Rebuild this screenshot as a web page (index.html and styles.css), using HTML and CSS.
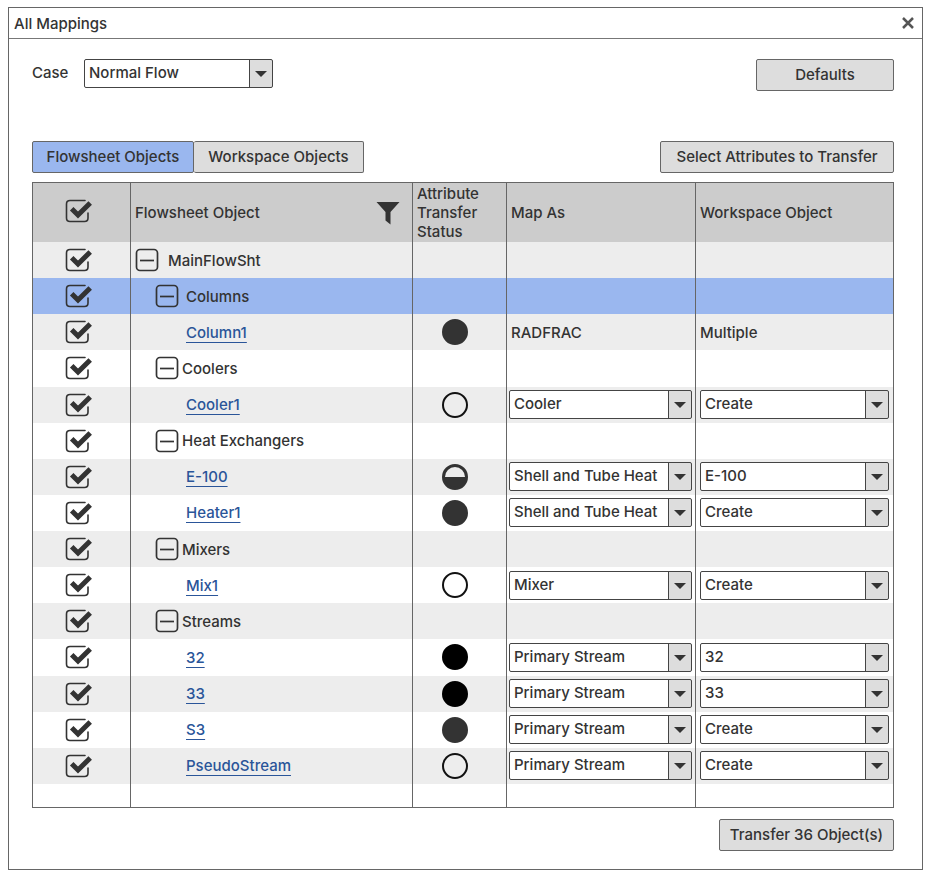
FILE: index.html
```html
<!DOCTYPE html>
<html lang="en">
<head>
<meta charset="utf-8">
<meta name="viewport" content="width=device-width, initial-scale=1">
<title>All Mappings</title>
<link rel="stylesheet" href="styles.css">
</head>
<body>
<svg class="symbols" aria-hidden="true">
  <symbol id="tick" viewBox="0 0 28 24">
    <path d="M20 1.500H5Q1.500 1.500 1.500 5V19Q1.500 22.500 5 22.500H19.500Q23 22.500 23 19V14" fill="none" stroke="#333" stroke-width="1.600" stroke-linecap="round"/>
    <path d="M6.700 9.800L13 16L25.200 4" fill="none" stroke="#333" stroke-width="5"/>
  </symbol>
  <symbol id="minus" viewBox="0 0 24 24">
    <rect x="1.500" y="1.500" width="21" height="21" rx="3.500" fill="none" stroke="#333" stroke-width="1.700"/>
    <path d="M5 12.500H19" stroke="#333" stroke-width="1.700"/>
  </symbol>
</svg>
<main class="window">
  <header class="titlebar">
    <h1>All Mappings</h1>
    <button class="close" type="button" aria-label="Close"><svg viewBox="0 0 12 12"><path d="M1 1L11 11M11 1L1 11" stroke="#555" stroke-width="2.500"/></svg></button>
  </header>
  <div class="content">
    <div class="bar case-bar">
      <label for="case">Case</label>
      <span class="select case-select"><select id="case"><option>Normal Flow</option></select></span>
      <button class="button defaults" type="button">Defaults</button>
    </div>
    <div class="bar">
      <div class="tabs">
        <button class="tab active" type="button" aria-pressed="true">Flowsheet Objects</button>
        <button class="tab" type="button" aria-pressed="false">Workspace Objects</button>
      </div>
      <button class="button attributes" type="button">Select Attributes to Transfer</button>
    </div>
    <table class="grid">
      <colgroup><col class="c-check"><col class="c-object"><col class="c-status"><col class="c-map"><col></colgroup>
      <thead>
        <tr>
          <th scope="col"><label class="check"><input type="checkbox" checked aria-label="Select all"><svg><use href="#tick"/></svg></label></th>
          <th scope="col"><div class="filterable">Flowsheet Object <button class="filter" type="button" aria-label="Filter"><svg viewBox="0 0 24 24"><path d="M0.500 1H23.500L14.500 11V23.500L9.500 19.500V11Z" fill="#333"/></svg></button></div></th>
          <th scope="col">Attribute<br>Transfer<br>Status</th>
          <th scope="col">Map As</th>
          <th scope="col">Workspace Object</th>
        </tr>
      </thead>
      <tbody>
        <tr>
          <td><label class="check"><input type="checkbox" checked aria-label="Select MainFlowSht"><svg><use href="#tick"/></svg></label></td>
          <td><div class="node root"><button type="button" aria-label="Collapse MainFlowSht"><svg><use href="#minus"/></svg></button>MainFlowSht</div></td>
          <td></td><td></td><td></td>
        </tr>
        <tr class="selected">
          <td><label class="check"><input type="checkbox" checked aria-label="Select Columns"><svg><use href="#tick"/></svg></label></td>
          <td><div class="node group wide"><button type="button" aria-label="Collapse Columns"><svg><use href="#minus"/></svg></button>Columns</div></td>
          <td></td><td></td><td></td>
        </tr>
        <tr>
          <td><label class="check"><input type="checkbox" checked aria-label="Select Column1"><svg><use href="#tick"/></svg></label></td>
          <td><div class="node leaf"><a href="#">Column1</a></div></td>
          <td><span class="status full" role="img" aria-label="Full"></span></td>
          <td>RADFRAC</td>
          <td>Multiple</td>
        </tr>
        <tr>
          <td><label class="check"><input type="checkbox" checked aria-label="Select Coolers"><svg><use href="#tick"/></svg></label></td>
          <td><div class="node group"><button type="button" aria-label="Collapse Coolers"><svg><use href="#minus"/></svg></button>Coolers</div></td>
          <td></td><td></td><td></td>
        </tr>
        <tr>
          <td><label class="check"><input type="checkbox" checked aria-label="Select Cooler1"><svg><use href="#tick"/></svg></label></td>
          <td><div class="node leaf"><a href="#">Cooler1</a></div></td>
          <td><span class="status" role="img" aria-label="None"></span></td>
          <td class="field"><span class="select"><select aria-label="Map Cooler1 as"><option>Cooler</option></select></span></td>
          <td class="field"><span class="select"><select aria-label="Workspace object for Cooler1"><option>Create</option></select></span></td>
        </tr>
        <tr>
          <td><label class="check"><input type="checkbox" checked aria-label="Select Heat Exchangers"><svg><use href="#tick"/></svg></label></td>
          <td><div class="node group"><button type="button" aria-label="Collapse Heat Exchangers"><svg><use href="#minus"/></svg></button>Heat Exchangers</div></td>
          <td></td><td></td><td></td>
        </tr>
        <tr>
          <td><label class="check"><input type="checkbox" checked aria-label="Select E-100"><svg><use href="#tick"/></svg></label></td>
          <td><div class="node leaf"><a href="#">E-100</a></div></td>
          <td><span class="status half" role="img" aria-label="Partial"></span></td>
          <td class="field"><span class="select"><select aria-label="Map E-100 as"><option>Shell and Tube Heat Exchanger</option></select></span></td>
          <td class="field"><span class="select"><select aria-label="Workspace object for E-100"><option>E-100</option></select></span></td>
        </tr>
        <tr>
          <td><label class="check"><input type="checkbox" checked aria-label="Select Heater1"><svg><use href="#tick"/></svg></label></td>
          <td><div class="node leaf"><a href="#">Heater1</a></div></td>
          <td><span class="status full" role="img" aria-label="Full"></span></td>
          <td class="field"><span class="select"><select aria-label="Map Heater1 as"><option>Shell and Tube Heat Exchanger</option></select></span></td>
          <td class="field"><span class="select"><select aria-label="Workspace object for Heater1"><option>Create</option></select></span></td>
        </tr>
        <tr>
          <td><label class="check"><input type="checkbox" checked aria-label="Select Mixers"><svg><use href="#tick"/></svg></label></td>
          <td><div class="node group"><button type="button" aria-label="Collapse Mixers"><svg><use href="#minus"/></svg></button>Mixers</div></td>
          <td></td><td></td><td></td>
        </tr>
        <tr>
          <td><label class="check"><input type="checkbox" checked aria-label="Select Mix1"><svg><use href="#tick"/></svg></label></td>
          <td><div class="node leaf"><a href="#">Mix1</a></div></td>
          <td><span class="status" role="img" aria-label="None"></span></td>
          <td class="field"><span class="select"><select aria-label="Map Mix1 as"><option>Mixer</option></select></span></td>
          <td class="field"><span class="select"><select aria-label="Workspace object for Mix1"><option>Create</option></select></span></td>
        </tr>
        <tr>
          <td><label class="check"><input type="checkbox" checked aria-label="Select Streams"><svg><use href="#tick"/></svg></label></td>
          <td><div class="node group"><button type="button" aria-label="Collapse Streams"><svg><use href="#minus"/></svg></button>Streams</div></td>
          <td></td><td></td><td></td>
        </tr>
        <tr>
          <td><label class="check"><input type="checkbox" checked aria-label="Select 32"><svg><use href="#tick"/></svg></label></td>
          <td><div class="node leaf"><a href="#">32</a></div></td>
          <td><span class="status solid" role="img" aria-label="Complete"></span></td>
          <td class="field"><span class="select"><select aria-label="Map 32 as"><option>Primary Stream</option></select></span></td>
          <td class="field"><span class="select"><select aria-label="Workspace object for 32"><option>32</option></select></span></td>
        </tr>
        <tr>
          <td><label class="check"><input type="checkbox" checked aria-label="Select 33"><svg><use href="#tick"/></svg></label></td>
          <td><div class="node leaf"><a href="#">33</a></div></td>
          <td><span class="status solid" role="img" aria-label="Complete"></span></td>
          <td class="field"><span class="select"><select aria-label="Map 33 as"><option>Primary Stream</option></select></span></td>
          <td class="field"><span class="select"><select aria-label="Workspace object for 33"><option>33</option></select></span></td>
        </tr>
        <tr>
          <td><label class="check"><input type="checkbox" checked aria-label="Select S3"><svg><use href="#tick"/></svg></label></td>
          <td><div class="node leaf"><a href="#">S3</a></div></td>
          <td><span class="status full" role="img" aria-label="Full"></span></td>
          <td class="field"><span class="select"><select aria-label="Map S3 as"><option>Primary Stream</option></select></span></td>
          <td class="field"><span class="select"><select aria-label="Workspace object for S3"><option>Create</option></select></span></td>
        </tr>
        <tr>
          <td><label class="check"><input type="checkbox" checked aria-label="Select PseudoStream"><svg><use href="#tick"/></svg></label></td>
          <td><div class="node leaf"><a href="#">PseudoStream</a></div></td>
          <td><span class="status" role="img" aria-label="None"></span></td>
          <td class="field"><span class="select"><select aria-label="Map PseudoStream as"><option>Primary Stream</option></select></span></td>
          <td class="field"><span class="select"><select aria-label="Workspace object for PseudoStream"><option>Create</option></select></span></td>
        </tr>
        <tr class="blank"><td></td><td></td><td></td><td></td><td></td></tr>
      </tbody>
    </table>
    <footer class="bar actions">
      <button class="button transfer" type="button">Transfer 36 Object(s)</button>
    </footer>
  </div>
</main>
</body>
</html>
```
FILE: styles.css
```css
* {
  box-sizing: border-box;
}

body {
  margin: 0;
  padding: 7px 11px 10px 8px;
  background: #fff;
  color: #333;
  font: 500 15px/19px Inter, sans-serif;
}

button,
select {
  margin: 0;
  color: inherit;
  font: inherit;
}

button {
  padding: 0;
  border: 0;
  background: none;
}

.symbols {
  position: absolute;
  width: 0;
  height: 0;
}

.window {
  border: 1px solid #666;
}

.titlebar {
  display: flex;
  align-items: center;
  justify-content: space-between;
  height: 31px;
  padding: 0 8px 0 5px;
  border-bottom: 1px solid #777;
}

h1 {
  margin: 0;
  font: inherit;
}

.close,
.close svg {
  display: block;
  width: 12px;
  height: 12px;
}

.content {
  padding: 20px 28px 18px 23px;
}

.bar {
  display: flex;
  align-items: center;
  justify-content: space-between;
}

.case-bar {
  align-items: flex-start;
  margin-bottom: 50px;
}

.case-bar label {
  padding-top: 4px;
  width: 52px;
}

.defaults {
  width: 138px;
  margin-left: auto;
}

.button,
.tab {
  height: 32px;
  padding-bottom: 2px;
  border: 1px solid #666;
  border-radius: 2px;
  background: #ddd;
}

.attributes {
  width: 234px;
}

.transfer {
  width: 175px;
}

.tabs {
  display: flex;
}

.tab {
  width: 170px;
  border-left: 0;
}

.tab.active {
  width: 162px;
  border-left: 1px solid #666;
  background: #9ab7ef;
}

.select {
  position: relative;
  display: block;
  height: 29px;
  border: 1px solid #444;
  border-radius: 2px;
  background: linear-gradient(#444, #444) right 22px top / 1px 100% no-repeat, linear-gradient(#ddd, #ddd) right / 22px 100% no-repeat #fff;
}

.select::after {
  content: "";
  position: absolute;
  top: 11px;
  right: 5px;
  border: 6px solid transparent;
  border-top-color: #333;
  border-bottom: 0;
  pointer-events: none;
}

.select select {
  display: block;
  width: 100%;
  height: 27px;
  padding: 0 29px 2px 4px;
  border: 0;
  background: none;
  appearance: none;
}

.case-select {
  width: 189px;
}

.grid {
  width: 100%;
  height: 626px;
  margin-top: 9px;
  border: 1px solid #666;
  border-spacing: 0;
  table-layout: fixed;
}

.c-check { width: 97px; }
.c-object { width: 282px; }
.c-status { width: 94px; }
.c-map { width: 189px; }

th,
td {
  padding: 0 4px;
  border-left: 1px solid #666;
  font-weight: 500;
  text-align: left;
}

th:first-child,
td:first-child {
  padding: 0 0 0 32px;
  border-left: 0;
}

thead tr {
  height: 59px;
  background: #ccc;
}

thead th:first-child {
  padding-bottom: 4px;
}

tbody tr {
  height: 36px;
}

tbody tr:nth-child(odd) {
  background: #ededed;
}

tbody .selected {
  background: #9ab7ef;
}

tbody .blank {
  height: 23px;
  background: none;
}

.check {
  position: relative;
  display: block;
  width: 28px;
  height: 24px;
}

.check input {
  position: absolute;
  inset: 0;
  width: 100%;
  height: 100%;
  margin: 0;
  opacity: 0;
}

.check svg {
  display: block;
  width: 28px;
  height: 24px;
}

.filterable {
  display: flex;
  align-items: center;
  justify-content: space-between;
  padding-right: 8px;
}

.filter,
.filter svg {
  display: block;
  width: 24px;
  height: 24px;
}

.node {
  display: flex;
  align-items: center;
  gap: 3px;
}

.node button,
.node svg {
  display: block;
  width: 24px;
  height: 24px;
}

.node.root {
  gap: 9px;
}

.node.group {
  padding-left: 20px;
}

.node.wide {
  gap: 7px;
}

.node.leaf {
  padding-left: 51px;
}

.node a {
  color: #2a5599;
  text-decoration: underline;
  text-underline-offset: 4px;
  text-decoration-thickness: 1px;
  text-decoration-skip-ink: none;
}

.status {
  display: block;
  width: 26px;
  height: 26px;
  margin-left: 25px;
  border: 2px solid #111;
  border-radius: 50%;
}

.status.full {
  border-color: #333;
  background: #333;
}

.status.solid {
  border-color: #000;
  background: #000;
}

.status.half {
  border: 3px solid #333;
  background: linear-gradient(transparent 50%, #333 50%);
}

.field {
  padding: 0 3px 0 2px;
}

.field + .field {
  padding: 0 4px;
}

.actions {
  justify-content: flex-end;
  margin-top: 11px;
}
```
